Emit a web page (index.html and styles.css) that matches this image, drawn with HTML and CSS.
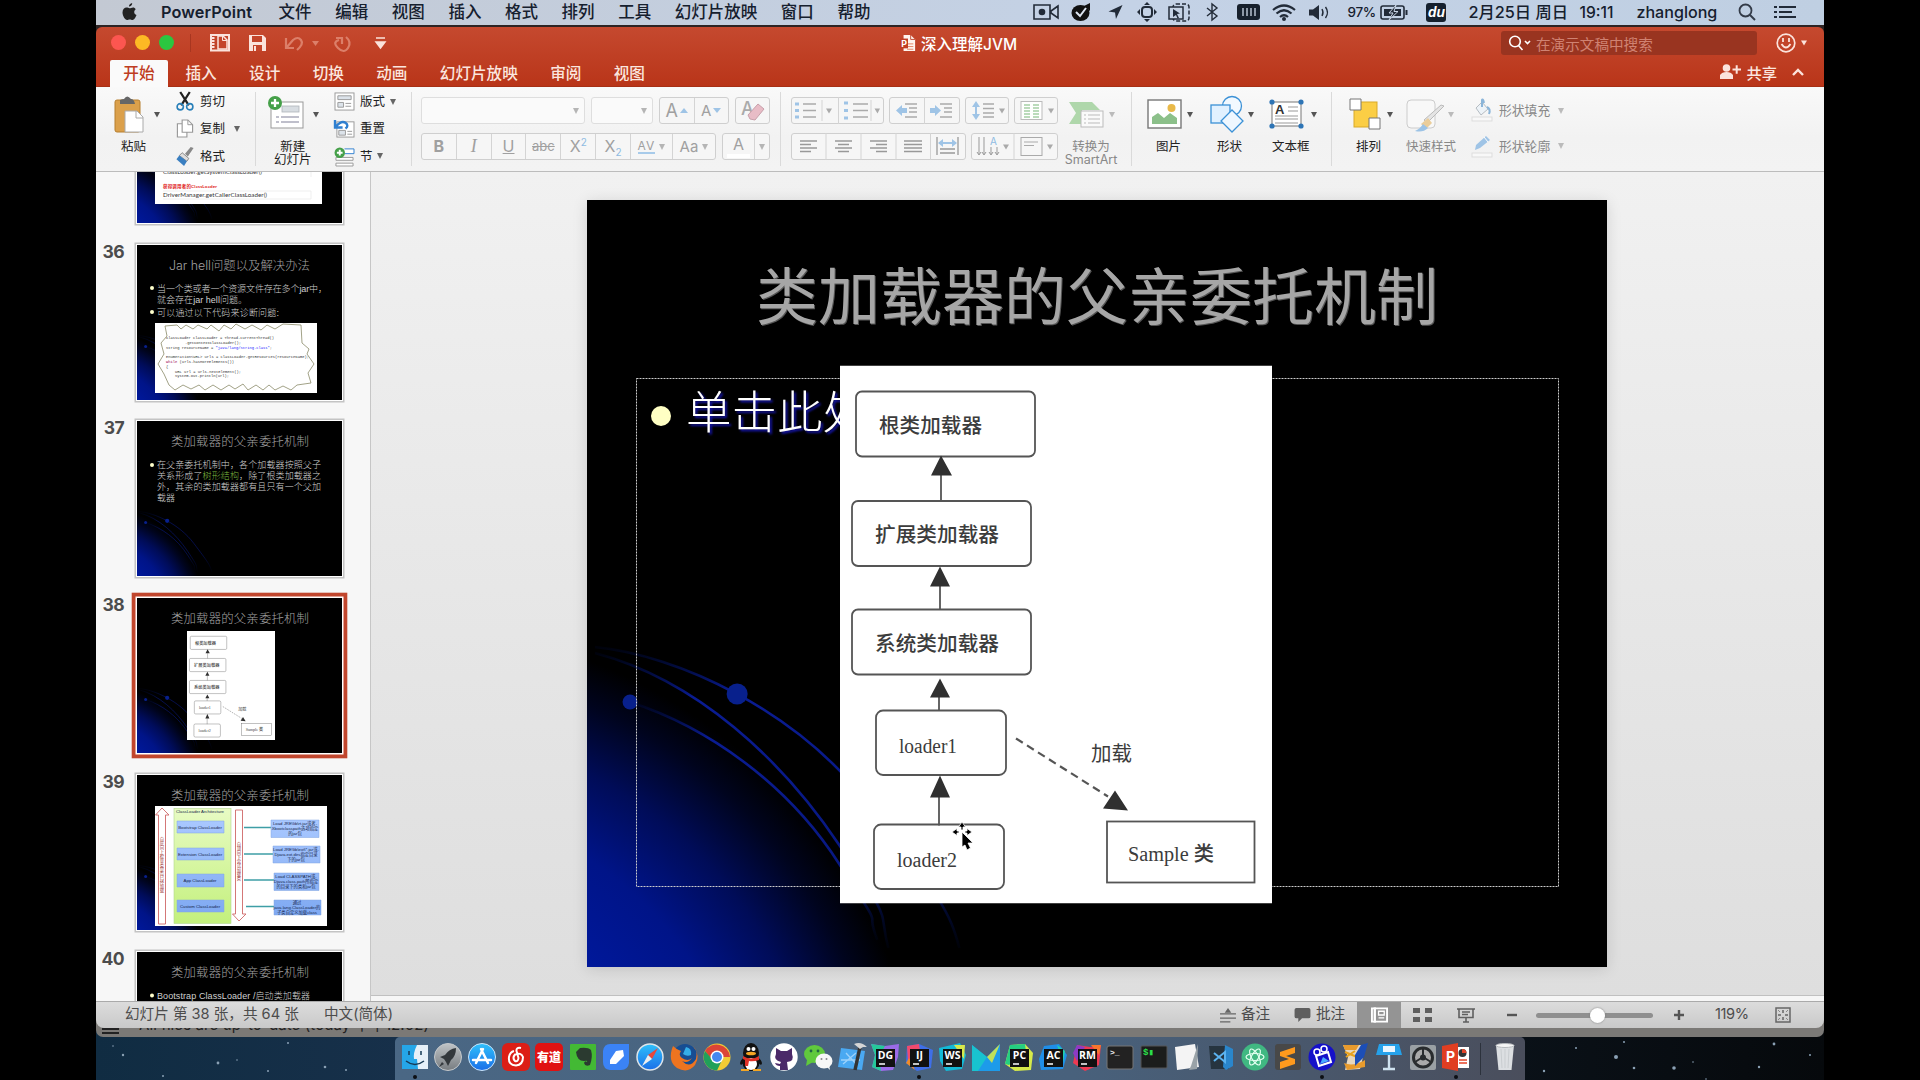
FILE: index.html
```html
<!DOCTYPE html>
<html lang="zh-CN">
<head>
<meta charset="utf-8">
<title>深入理解JVM</title>
<link rel="stylesheet" href="styles.css">
</head>
<body>
<svg class="defs" width="0" height="0">
  <defs>
    <radialGradient id="glow" gradientUnits="userSpaceOnUse" cx="-187" cy="950" r="525">
      <stop offset="0.5" stop-color="#00189a"/><stop offset="0.66" stop-color="#001488"/><stop offset="0.8" stop-color="#000c58"/><stop offset="0.92" stop-color="#00041e"/><stop offset="1" stop-color="#000"/>
    </radialGradient>
    <linearGradient id="arc" x1="0" y1="0" x2="0" y2="1"><stop offset="0" stop-color="#001470" stop-opacity="0.1"/><stop offset="0.15" stop-color="#0a1c92"/><stop offset="0.7" stop-color="#081880"/><stop offset="1" stop-color="#001050" stop-opacity="0.1"/></linearGradient>
    <linearGradient id="box" x1="0" y1="0" x2="0" y2="1"><stop offset="0" stop-color="#a9c8ff"/><stop offset="1" stop-color="#7fa9f2"/></linearGradient>
    <linearGradient id="lime" x1="0" y1="0" x2="0" y2="1"><stop offset="0" stop-color="#e8fbc4"/><stop offset="1" stop-color="#c3f07c"/></linearGradient>
    <linearGradient id="sky" x1="0" y1="0" x2="0" y2="1"><stop offset="0" stop-color="#2fc0fb"/><stop offset="1" stop-color="#1a6fe8"/></linearGradient>
    <linearGradient id="metal" x1="0" y1="0" x2="0" y2="1"><stop offset="0" stop-color="#bfc3c6"/><stop offset="1" stop-color="#777c80"/></linearGradient>
  </defs>
  <symbol id="backdrop" viewBox="0 0 1019 767" preserveAspectRatio="none">
    <rect width="1019" height="767" fill="#000"/>
    <rect width="520" height="767" fill="url(#glow)"/>
    <g fill="none" stroke="url(#arc)" stroke-width="2.600">
      <path d="M8 447C90 455 210 510 282 605S362 710 372 748"/>
      <path d="M8 453C110 480 195 560 252 645S290 705 301 748"/>
      <path d="M43 502C120 527 200 583 252 664S275 700 290 740"/>
    </g>
    <circle cx="150" cy="494" r="10.5" fill="#08208c"/><circle cx="43" cy="502" r="7.5" fill="#08208c"/>
  </symbol>
  <symbol id="diagram" viewBox="840 365 432 538" preserveAspectRatio="none">
    <rect x="840" y="365" width="432" height="538" fill="#fff"/>
    <g fill="none" stroke="#555" stroke-width="1.8">
      <rect x="856" y="391" width="179" height="65" rx="6"/><rect x="852" y="500.500" width="179" height="65" rx="6"/><rect x="852" y="609" width="179" height="65" rx="6"/><rect x="876" y="710" width="130" height="64.500" rx="7"/><rect x="874" y="824" width="130" height="64.500" rx="7"/><rect x="1107" y="821" width="147.500" height="61"/>
      <path d="M941 474V500M940 585V609M939 696V710M939 796V825"/>
      <path d="M1016 738L1108 796" stroke-width="2.200" stroke-dasharray="8 5"/>
    </g>
    <path fill="#303030" d="M941 455L952 475H931ZM940 566L950 586H930ZM940 678L950 697H930ZM940 775L950 797H930ZM1115 790L1128 810L1103 808Z"/>
    <g class="d-text">
      <text x="879" y="432" textLength="103" lengthAdjust="spacingAndGlyphs">根类加载器</text><text x="875" y="541.500" textLength="124" lengthAdjust="spacingAndGlyphs">扩展类加载器</text><text x="875" y="650" textLength="124" lengthAdjust="spacingAndGlyphs">系统类加载器</text><text class="thin" x="1091" y="760" textLength="41" lengthAdjust="spacingAndGlyphs">加载</text>
      <text x="899" y="752" textLength="58" lengthAdjust="spacingAndGlyphs">loader1</text><text x="897" y="866" textLength="60" lengthAdjust="spacingAndGlyphs">loader2</text><text x="1128" y="860" textLength="86" lengthAdjust="spacingAndGlyphs">Sample 类</text>
    </g>
  </symbol>
  <symbol id="arrow" viewBox="0 0 6 6"><path d="M0 0H6L3 6Z" fill="currentColor"/></symbol>
</svg>

<div class="screen">
  <header class="menubar">
    <svg class="apple" viewBox="0 0 15 18"><path fill="#222" d="M10.2 0c.1 2-1.500 3.700-3.200 3.600C6.800 1.800 8.500.2 10.200 0zM13.700 6.200c-2.200 1.500-1.900 4.700.8 5.900-.7 2-2.300 4.900-4 4.900-1 0-1.500-.6-2.700-.6s-1.800.6-2.700.6C3 17 .5 12.800.5 9.500.5 6.300 2.500 4.500 4.500 4.500c1.300 0 2.200.7 3.100.7.800 0 2-.8 3.500-.8 1 0 2 .6 2.600 1.800z"/></svg>
    <nav class="menus"><b>PowerPoint</b><span>文件</span><span>编辑</span><span>视图</span><span>插入</span><span>格式</span><span>排列</span><span>工具</span><span>幻灯片放映</span><span>窗口</span><span>帮助</span></nav>
    <div class="tray">
      <svg class="t-cam" viewBox="0 0 26 16"><path d="M1 1H17V15H1ZM25 2L18 7V9L25 14Z" fill="none" stroke="#222b38" stroke-width="1.6"/><circle cx="9" cy="8" r="3.300" fill="#222b38"/></svg>
      <svg class="t-check" viewBox="0 0 20 18"><ellipse cx="9.500" cy="10" rx="9" ry="8" fill="#111"/><path d="M13 3L19 0V8Z" fill="#111"/><path d="M5 9L9 13L15 5" fill="none" stroke="#dde5f0" stroke-width="2"/></svg>
      <svg class="t-loc" viewBox="0 0 15 15"><path d="M15 0L8 15L7 8L0 7Z" fill="#222b38"/></svg>
      <svg class="t-target" viewBox="0 0 20 20"><rect x="5" y="5" width="10" height="10" rx="3" fill="none" stroke="#222b38" stroke-width="2"/><path d="M10 0L13 3H7ZM10 20L13 17H7ZM0 10L3 7V13ZM20 10L17 7V13Z" fill="#222b38"/></svg>
      <svg class="t-frame" viewBox="0 0 22 19"><rect x="5" y="1" width="16" height="17" rx="3" fill="none" stroke="#222b38" stroke-width="1.500" stroke-dasharray="4 2"/><rect x="1" y="4" width="14" height="12" fill="#c6d3e5" stroke="#222b38" stroke-width="1.500"/><path d="M5 6L12 10.500L9 11L11 15L9.500 15.500L8 12L5 14Z" fill="#222b38"/></svg>
      <svg class="t-bt" viewBox="0 0 12 18"><path d="M1 5L11 13L6 17V1L11 5L1 13" fill="none" stroke="#222b38" stroke-width="1.400"/></svg>
      <svg class="t-mem" viewBox="0 0 23 16"><rect width="23" height="16" rx="3" fill="#17202c"/><path d="M6 4V12M10 4V12M14 4V12M18 4V12" stroke="#cdd8e6" stroke-width="1.300"/></svg>
      <svg class="t-wifi" viewBox="0 0 24 17"><path d="M1 6Q12-3 23 6M4.500 9.500Q12 3 19.500 9.500M8 13Q12 9.500 16 13" fill="none" stroke="#222b38" stroke-width="2.200"/><circle cx="12" cy="15" r="2" fill="#222b38"/></svg>
      <svg class="t-vol" viewBox="0 0 21 15"><path d="M0 4.500H4L10 0V15L4 10.500H0Z" fill="#222b38"/><path d="M13 4Q15 7.500 13 11M16.500 2Q20.500 7.500 16.500 13" fill="none" stroke="#222b38" stroke-width="1.400"/></svg>
      <span class="t-pct">97%</span>
      <svg class="t-bat" viewBox="0 0 28 15"><rect x="1" y="1" width="23" height="13" rx="2" fill="none" stroke="#222b38" stroke-width="1.600"/><rect x="4" y="4" width="17" height="7" fill="#222b38"/><path d="M16 0L9 8H13L9 15L18 6.500H14Z" fill="#222b38" stroke="#c8d4e4" stroke-width="1"/><rect x="25.500" y="5" width="2" height="5" fill="#222b38"/></svg>
      <span class="t-du">du</span>
      <span class="t-date">2月25日 周日</span><span class="t-time">19:11</span><span class="t-user">zhanglong</span>
      <svg class="t-find" viewBox="0 0 18 18"><circle cx="7.500" cy="7.500" r="6" fill="none" stroke="#333b48" stroke-width="1.800"/><path d="M12 12L17 17" stroke="#333b48" stroke-width="2"/></svg>
      <svg class="t-list" viewBox="0 0 22 14"><path d="M0 2H3M0 7H3M0 12H3M5 2H22M5 7H18M5 12H22" stroke="#222b38" stroke-width="2"/></svg>
    </div>
  </header>

  <main class="window">
    <div class="titlebar">
      <div class="title-row">
        <div class="lights"><i class="close"></i><i class="min"></i><i class="max"></i></div>
        <svg class="quick" viewBox="0 0 200 24">
          <path d="M5.500 3V21" stroke="#a83620"/>
          <path d="M26 4H44V19.500H26Z" fill="none" stroke="#fbe3dc" stroke-width="2"/><path d="M28 6V18" stroke="#fbe3dc" stroke-width="3" stroke-dasharray="2 1"/><path d="M33 5H38L42 9V18H33Z" fill="#c4452b" stroke="#fbe3dc" stroke-width="1.500"/><path d="M37.500 5V9.500H42" fill="none" stroke="#fbe3dc"/>
          <path d="M64 4H78L81 7V20H64Z" fill="#fbe3dc"/><path d="M67 5H77V11H67ZM68 14H77V20H68Z" fill="#c4452b"/><path d="M70 15V20" stroke="#fbe3dc" stroke-width="2"/>
          <g fill="none" stroke="#dc7f69" stroke-width="2.200"><path d="M101 7V17H109M102 16L108 9Q113 5 116 9T112 19"/><path d="M161 6Q167 11 163 17T153 17T154 9M151 7H157V13"/></g>
          <path d="M127 10H134L130.500 15Z" fill="#dc7f69"/><path d="M191 7H200M191 11H200L195.500 17Z" fill="#fbe3dc" stroke="#fbe3dc" stroke-width="1.500"/>
        </svg>
        <div class="doc-title"><svg viewBox="0 0 18 20"><path d="M4 1H12L17 6V19H4Z" fill="#fff4ee"/><path d="M12 1V6H17" fill="none" stroke="#bd4029"/><path d="M8 11H15M8 14H15M8 17H15" stroke="#e07a58"/><rect y="5" width="9" height="11" fill="#c03d25"/><text x="1.500" y="14" class="p-mark">P</text></svg><span>深入理解JVM</span></div>
        <div class="search"><svg viewBox="0 0 24 16"><circle cx="7" cy="6.500" r="5.300" fill="none" stroke="#fff" stroke-width="1.600"/><path d="M10.500 10.500L14.500 15M17 6L19.500 8.500L22 6" fill="none" stroke="#fff" stroke-width="1.600"/></svg><span>在演示文稿中搜索</span></div>
        <svg class="smile" viewBox="0 0 32 20"><circle cx="10" cy="10" r="8.800" fill="none" stroke="#fbe3dc" stroke-width="1.700"/><path d="M5.500 11Q10 18 14.500 11M7 5V9M13 5V9" fill="none" stroke="#fbe3dc" stroke-width="1.800"/><path d="M25 7.500H31L28 12.500Z" fill="#fbe3dc"/></svg>
      </div>
      <div class="tab-row">
        <nav class="tabs"><span class="on">开始</span><span>插入</span><span>设计</span><span>切换</span><span>动画</span><span>幻灯片放映</span><span>审阅</span><span>视图</span></nav>
        <div class="share"><svg viewBox="0 0 21 15"><circle cx="6.500" cy="4" r="3.800" fill="#fbe3dc"/><path d="M0 15V11Q2 8 6.500 8T13 11V15Z" fill="#fbe3dc"/><path d="M12.500 5.500H21M16.700 1.200V9.800" stroke="#fbe3dc" stroke-width="2"/></svg><span>共享</span><svg class="chev" viewBox="0 0 12 8"><path d="M1 7L6 2L11 7" fill="none" stroke="#fbe3dc" stroke-width="2.400"/></svg></div>
      </div>
    </div>

    <section class="ribbon">
      <div class="grp g-clip">
        <div class="big paste"><svg viewBox="0 0 50 38"><rect x="1" y="5" width="25" height="32" rx="2" fill="#dba04b" stroke="#b67e2f"/><path d="M6 9V5Q8 4 10 4Q13-1 17 4Q20 4 21 9Z" fill="#666"/><path d="M11 16H23L29 22V37H11Z" fill="#fff" stroke="#aaa"/><path d="M22 16V23H29" fill="none" stroke="#aaa"/><path d="M40 17H46L43 22.500Z" fill="#555"/></svg><span>粘贴</span></div>
        <div class="col">
          <div class="row"><svg viewBox="0 0 18 20"><path d="M4 0L13 14M14 0L5 14" stroke="#222" stroke-width="2.400"/><circle cx="4" cy="15.500" r="3.300" fill="none" stroke="#2a80b9" stroke-width="1.700"/><circle cx="14" cy="15.500" r="3.300" fill="none" stroke="#2a80b9" stroke-width="1.700"/></svg><span>剪切</span></div>
          <div class="row"><svg viewBox="0 0 18 20"><path d="M6 1H12L17 6V14H6ZM1 5H6V14H11V19H1Z" fill="#fff" stroke="#999" stroke-width="1.200"/><path d="M12 1V6H17" fill="none" stroke="#999"/></svg><span>复制</span><svg class="dd"><use href="#arrow"/></svg></div>
          <div class="row"><svg viewBox="0 0 18 20"><path d="M18 1L15 0L9 7L12 10Z" fill="#888"/><path d="M6 6L13 12L11 15L3 9Z" fill="#ddd" stroke="#888"/><path d="M3 9L11 15L8 20L0 13Z" fill="#3a7fc1"/></svg><span>格式</span></div>
        </div>
      </div>
      <div class="grp g-slide">
        <div class="big newslide"><svg viewBox="0 0 52 38"><rect x="3" y="7" width="32" height="26" fill="#fff" stroke="#999"/><rect x="14" y="11" width="17" height="6" fill="#d8dde2" stroke="#b0b5ba" stroke-width=".8"/><path d="M8 22H11M13 22H31M8 27H11M13 27H31" stroke="#aab" stroke-width="1.400"/><circle cx="7" cy="8" r="7" fill="#45a049"/><path d="M3 8H11M7 4V12" stroke="#fff" stroke-width="2.300"/><path d="M45 17H51L48 22.500Z" fill="#555"/></svg><span>新建<br>幻灯片</span></div>
        <div class="col">
          <div class="row"><svg viewBox="0 0 22 20"><rect x="1" y="1" width="20" height="18" fill="#fff" stroke="#999"/><path d="M4 4H18V8H4ZM4 11H10V16H4Z" fill="#dce3ea" stroke="#999"/><path d="M12 12H18M12 15H18" stroke="#999"/></svg><span>版式</span><svg class="dd"><use href="#arrow"/></svg></div>
          <div class="row"><svg viewBox="0 0 22 20"><rect x="3" y="3" width="18" height="16" fill="#fff" stroke="#999"/><path d="M5 12H12V17H5ZM14 13H19M14 16H19" fill="#dce3ea" stroke="#999"/><path d="M1 1V9H9M2 8Q8 1 12 4T12 10" fill="none" stroke="#2f7fd0" stroke-width="2.500"/></svg><span>重置</span></div>
          <div class="row"><svg viewBox="0 0 22 20"><path d="M11 2H21V7H11" fill="#fff" stroke="#2f7fd0"/><path d="M2 11H20V14H2ZM2 17H20V20H2Z" fill="#fff" stroke="#999"/><circle cx="6" cy="6" r="5.500" fill="#45a049"/><path d="M3 6H9M6 3V9" stroke="#fff" stroke-width="2"/></svg><span>节</span><svg class="dd tight"><use href="#arrow"/></svg></div>
        </div>
      </div>
      <div class="grp g-font">
        <div class="line">
          <div class="combo wide"><svg class="dd"><use href="#arrow"/></svg></div><div class="combo"><svg class="dd"><use href="#arrow"/></svg></div>
          <div class="seg f1"><span class="lg">A<i class="up"></i></span><span>A<i class="down"></i></span></div>
          <div class="seg f2"><svg viewBox="0 0 35 27"><text x="6" y="18" class="glyph">A</text><path d="M13 18L23 7L29 12L20 23L15 22Z" fill="#e8bcc6" stroke="#c7a0aa"/></svg></div>
        </div>
        <div class="line">
          <div class="seg f3"><span><b>B</b></span><span><i class="it">I</i></span><span><u>U</u></span><span class="sm"><s>abc</s></span><span>X<sup>2</sup></span><span>X<sub>2</sub></span><span class="w2"><em>AV</em><svg class="dd"><use href="#arrow"/></svg></span><span class="w2">Aa<svg class="dd"><use href="#arrow"/></svg></span></div>
          <div class="seg f4"><span class="w3"><em>A</em></span><span class="w4"><svg class="dd"><use href="#arrow"/></svg></span></div>
        </div>
      </div>
      <div class="grp g-para">
        <div class="paras">
          <div class="line">
            <div class="seg p1"><svg viewBox="0 0 93 27"><path d="M4 7H8M4 13.500H8M4 20H8M53 6H57M53 13.500H57M53 21H57" stroke="#9fc4e6" stroke-width="3"/><path d="M12 7H25M12 13.500H25M12 20H25M62 7H77M62 13.500H77M62 20H77" stroke="#aaa" stroke-width="1.300"/><path d="M31 3V24M47.500 0V27M80 3V24" stroke="#d4d4d4"/><path d="M35 11.500H41L38 16.500ZM83.500 11.500H89L86.500 16.500Z" fill="#aaa"/></svg></div>
            <div class="seg p2"><svg viewBox="0 0 71 27"><path d="M35.500 0V27" stroke="#d4d4d4"/><path d="M7 13.500L13 8V11H18V16H13V19ZM52 13.500L46 8V11H41V16H46V19Z" fill="#9fc4e6"/><path d="M16 7H28M20 11H28M20 15H28M16 20H28M51 7H63M55 11H63M55 15H63M51 20H63" stroke="#aaa" stroke-width="1.300"/></svg></div>
            <div class="seg p3"><svg viewBox="0 0 44 27"><path d="M11 4L15 10H12V17H15L11 23L7 17H10V10H7Z" fill="#9fc4e6"/><path d="M18 7H29M18 11.500H29M18 16H29M18 20H29" stroke="#aaa" stroke-width="1.300"/><path d="M34 11.500H40L37 16.500Z" fill="#aaa"/></svg></div>
            <div class="seg p3"><svg viewBox="0 0 44 27"><rect x="7" y="4.500" width="21" height="18" fill="#fff" stroke="#bbb"/><path d="M10 8H16M10 11H16M10 14H16M10 17H16M10 20H16M19 8H25M19 11H25M19 14H25M19 17H25M19 20H25" stroke="#a5d0a5" stroke-width="1.500"/><path d="M34 11.500H40L37 16.500Z" fill="#aaa"/></svg></div>
          </div>
          <div class="line">
            <div class="seg p4"><svg viewBox="0 0 175 27"><path d="M35 0V27M70 0V27M105 0V27M139.500 0V27" stroke="#d4d4d4"/><path d="M9 8H26M9 11.500H20M9 15H26M9 18.500H20M44 8H61M47 11.500H58M44 15H61M47 18.500H58M79 8H96M85 11.500H96M79 15H96M85 18.500H96M113 8H131M113 11.500H131M113 15H131M113 18.500H131M146 4V22M167 4V22M149 16H164M149 20H164" stroke="#999" stroke-width="1.300"/><path d="M147 10L152 6V9H161V6L166 10L161 14V11H152V14Z" fill="#9fc4e6"/></svg></div>
            <div class="seg p5"><svg viewBox="0 0 87 27"><path d="M43 0V27" stroke="#d4d4d4"/><path d="M8 4V21M13 4V21M20 14V21M26 14V21M6 19L8 22L10 19M11 19L13 22L15 19M18 19L20 22L22 19M24 19L26 22L28 19" fill="none" stroke="#999"/><text x="19" y="12" class="tiny-a">A</text><rect x="50" y="4.500" width="21" height="18" fill="none" stroke="#aaa"/><path d="M53 9H67M53 12.500H63" stroke="#aaa"/><path d="M32 11.500H38L35 16.500ZM76 11.500H82L79 16.500Z" fill="#aaa"/></svg></div>
          </div>
        </div>
        <div class="big smart dim"><svg viewBox="0 0 50 38"><path d="M1 7H24L32 15H14V24L13 29H1L8 18Z" fill="#afd7ab"/><rect x="13" y="16" width="22" height="16" fill="#fafafa" stroke="#bbb"/><path d="M16 20H18M20 20H32M16 24H18M20 24H32M16 28H18M20 28H32" stroke="#bbb"/><path d="M41 17H47L44 22.500Z" fill="#bbb"/></svg><span>转换为<br>SmartArt</span></div>
      </div>
      <div class="grp g-insert">
        <div class="big pic"><svg viewBox="0 0 50 38"><rect x="1" y="5" width="33" height="28" fill="#fff" stroke="#777" stroke-width="1.400"/><path d="M5 29V22L11 18L17 23L23 18L30 23V29Z" fill="#8cc08a"/><circle cx="24.500" cy="13" r="4" fill="#e9b949"/><path d="M40 17H46L43 22.500Z" fill="#555"/></svg><span>图片</span></div>
        <div class="big shp"><svg viewBox="0 0 50 38"><circle cx="22" cy="11" r="9.500" fill="#f2f9ff" stroke="#3b91d6" stroke-width="1.300"/><rect x="1" y="10" width="19" height="18" fill="#e1f1ff" stroke="#3b91d6" stroke-width="1.300"/><path d="M22 15L33 26L22 37L11 26Z" fill="#eef7ff" stroke="#3b91d6" stroke-width="1.300"/><path d="M38 17H44L41 22.500Z" fill="#555"/></svg><span>形状</span></div>
        <div class="big txt"><svg viewBox="0 0 50 38"><rect x="2" y="7" width="29" height="24" fill="#fff" stroke="#777"/><path d="M18 12H28M18 16H28M5 21H28M5 24H28M5 28H28" stroke="#999"/><text x="5" y="19" class="box-a">A</text><g fill="#2e75b6"><circle cx="2" cy="7" r="2.600"/><circle cx="31" cy="7" r="2.600"/><circle cx="2" cy="31" r="2.600"/><circle cx="31" cy="31" r="2.600"/></g><path d="M41 17H47L44 22.500Z" fill="#555"/></svg><span>文本框</span></div>
      </div>
      <div class="grp g-style">
        <div class="big arr"><svg viewBox="0 0 50 38"><rect x="5" y="7" width="23" height="25" fill="#fbce45" stroke="#d9a928"/><path d="M1 4H12V15H1ZM20 23H31V34H20Z" fill="#fff" stroke="#777"/><path d="M38 17H44L41 22.500Z" fill="#555"/></svg><span>排列</span></div>
        <div class="big quickst dim"><svg viewBox="0 0 50 38"><rect x="1" y="5" width="28" height="28" rx="4" fill="#f8f8f8" stroke="#ccc"/><path d="M38 11L21 28L18 25L35 10Z" fill="#e4e4e4" stroke="#bbb"/><path d="M22 23L26 28L20 34L15 29Z" fill="#eacd9a"/><path d="M17 29L22 33Q17 38 9 36Q14 34 17 29Z" fill="#9cc3e6"/><path d="M42 17H48L45 22.500Z" fill="#bbb"/></svg><span>快速样式</span></div>
        <div class="fills">
          <div class="row dim"><svg viewBox="0 0 22 23"><path d="M5 9L11 3L17 10L10 16Z" fill="#edf3f8" stroke="#b5bcc2"/><path d="M11 8V1Q12-1 13 4M16 8Q20 10 18 15" stroke="#8bb5d9" stroke-width="2" fill="none"/><rect x="1" y="18" width="20" height="4" fill="#f8f8f8" stroke="#ddd"/></svg><span>形状填充</span><svg class="dd"><use href="#arrow"/></svg></div>
          <div class="row dim"><svg viewBox="0 0 22 23"><path d="M4 15L5 10L15 1L19 5L9 13Z" fill="#9fc4e6"/><path d="M13 2L17 7" stroke="#fff"/><rect x="1" y="18" width="20" height="4" fill="#f8f8f8" stroke="#ddd"/></svg><span>形状轮廓</span><svg class="dd"><use href="#arrow"/></svg></div>
        </div>
      </div>
    </section>

    <div class="work">
      <aside class="pane"><div class="thumbs">
        <div class="thumb"><b></b><svg viewBox="0 0 205 155"><use href="#backdrop" width="205" height="155"/><rect x="18" y="30" width="167" height="106" fill="#fff"/><text x="26" y="106" class="gs" textLength="99">ClassLoader.getSystemClassLoader()</text><text x="26" y="120" class="gs red" textLength="54">获得调用者的ClassLoader</text><text x="26" y="129" class="gs" textLength="104">DriverManager.getCallerClassLoader()</text><path d="M26 123H174V131H26M174 101V109" fill="none" stroke="#e8e8e8" stroke-width=".7"/></svg></div>
        <div class="thumb"><b>36</b><svg viewBox="0 0 205 155"><use href="#backdrop" width="205" height="155"/><text x="32" y="24.500" class="tt" textLength="141">Jar hell问题以及解决办法</text><circle cx="15" cy="43" r="2" fill="#ffffcc"/><circle cx="15" cy="67" r="2" fill="#ffffcc"/><g class="tb"><text x="20" y="46.500" textLength="170">当一个类或者一个资源文件存在多个jar中，</text><text x="20" y="57.500" textLength="90">就会存在jar hell问题。</text><text x="20" y="70.500" textLength="122">可以通过以下代码来诊断问题:</text></g><rect x="18" y="78" width="162" height="70" fill="#fff"/><path d="M28 81L40 80L44 84L49 80L56 84L61 80L70 84L74 80L82 86L87 80L94 84L99 79L108 84L115 80L124 85L130 80L138 84L146 79L164 80L165 98L172 104L170 109L177 119L171 128L174 138L160 140L154 145L146 141L138 145L132 140L126 145L119 140L111 145L106 139L98 144L92 140L84 145L76 140L68 145L62 140L54 144L46 140L38 145L32 140L27 129L21 119L27 109L24 98L30 91Z" fill="none" stroke="#8a8a68" stroke-width=".8"/><g class="code"><text x="29" y="94" textLength="108">ClassLoader classLoader = Thread.currentThread()</text><text x="48" y="98.500" textLength="56">.getContextClassLoader();</text><text x="29" y="103.500" textLength="106">String resourceName = <tspan fill="#22f">"java/lang/String.class"</tspan>;</text><text x="29" y="113" textLength="143">Enumeration&lt;URL&gt; urls = classLoader.getResources(resourceName);</text><text x="29" y="118" textLength="68"><tspan fill="#905">while</tspan> (urls.hasMoreElements())</text><text x="29" y="122.500">{</text><text x="38" y="127.500" textLength="66">URL url = urls.nextElement();</text><text x="38" y="132" textLength="54">System.out.println(url);</text></g></svg></div>
        <div class="thumb"><b>37</b><svg viewBox="0 0 205 155"><use href="#backdrop" width="205" height="155"/><text x="34" y="24.500" class="tt" textLength="138">类加载器的父亲委托机制</text><circle cx="15" cy="44" r="2" fill="#ffffcc"/><g class="tb"><text x="20" y="47" textLength="164">在父亲委托机制中，各个加载器按照父子</text><text x="20" y="58" textLength="164">关系形成了<tspan fill="#7cb83e">树形结构</tspan>，除了根类加载器之</text><text x="20" y="69" textLength="164">外，其余的类加载器都有且只有一个父加</text><text x="20" y="79.500" textLength="18">载器</text></g></svg></div>
        <div class="thumb active"><b>38</b><svg viewBox="0 0 205 155"><use href="#backdrop" width="205" height="155"/><text x="34" y="24.500" class="tt" textLength="138">类加载器的父亲委托机制</text><use href="#diagram" x="50" y="33" width="88" height="109"/></svg></div>
        <div class="thumb"><b>39</b><svg viewBox="0 0 205 155"><use href="#backdrop" width="205" height="155"/><text x="34" y="24.500" class="tt" textLength="138">类加载器的父亲委托机制</text><rect x="18" y="31" width="172" height="120" fill="#fff"/><rect x="37" y="33.500" width="57" height="115" fill="url(#lime)" stroke="#b3d890" stroke-width=".6"/>
          <path d="M25 33L32 40H28.500V149H21.500V40H18.500ZM102 146L95.500 139H98.500V35H105.500V139H109Z" fill="#fff" stroke="#cf6868" stroke-width=".9"/>
          <path d="M107 52.500H135M107 79H137M107 105H137M109 131.500H137" stroke="#3f9ea6" stroke-width="1.500"/>
          <g fill="url(#box)" stroke="#80a5e0" stroke-width=".5"><path d="M40 46H87V58H40ZM40 73H87V85H40ZM40 99H87V112H40ZM40 125H87V137H40ZM134 45H182V62.500H134ZM136 71H183V88H136ZM137 98H182V115.500H137ZM137 125H184V140H137Z"/></g>
          <g class="cl"><text x="63" y="38">ClassLoader Architecture</text><text x="63" y="53.500">Bootstrap ClassLoader</text><text x="63" y="80.500">Extension ClassLoader</text><text x="63" y="107">App ClassLoader</text><text x="63" y="132.500">Custom ClassLoader</text>
          <text x="158" y="50">Load JRE\lib\rt.jar或者-</text><text x="158" y="55">Xbootclasspath选项指定</text><text x="158" y="60">的jar包</text><text x="159" y="76">Load JRE\lib\ext\*.jar或-</text><text x="159" y="81">Djava.ext.dirs指定目录</text><text x="159" y="86">下的jar包</text><text x="159" y="103">Load CLASSPATH或-</text><text x="159" y="108">Djava.class.path所指定</text><text x="159" y="113">的目录下的类和jar包</text><text x="160" y="129">通过</text><text x="160" y="134">java.lang.ClassLoader的</text><text x="160" y="139">子类自定义加载class</text></g>
          <text x="25" y="62" class="vt">自底向上检查类是否已经加载</text><text x="102" y="67" class="vt">自顶向下尝试加载类</text></svg></div>
        <div class="thumb"><b>40</b><svg viewBox="0 0 205 155"><use href="#backdrop" width="205" height="155"/><text x="34" y="24.500" class="tt" textLength="138">类加载器的父亲委托机制</text><circle cx="15" cy="43.500" r="2" fill="#ffffcc"/><text x="20" y="46.500" class="tb" textLength="153">Bootstrap ClassLoader /启动类加载器</text></svg></div>
      </div></aside>
      <section class="stage">
        <div class="canvas"><svg class="slide" viewBox="587 200 1020 767">
          <use href="#backdrop" x="587" y="200" width="1020" height="767"/>
          <rect x="636.500" y="378.500" width="922" height="508" fill="none" stroke="#ccc" stroke-dasharray="2 1"/>
          <text class="s-title" x="756" y="320" textLength="682">类加载器的父亲委托机制</text>
          <circle cx="661" cy="416" r="10" fill="#ffffc4"/><text class="s-body" x="686" y="429" textLength="182">单击此处</text>
          <use href="#diagram" x="840" y="365.500" width="432" height="538"/>
          <g stroke="#fff" stroke-width=".8" fill="#000"><path d="M962 822L965.500 827H963V830H961V827H958.500ZM952 832L957 828.500V831H959V833H957V835.500ZM972 832L967 828.500V831H965V833H967V835.500Z"/><path d="M962 832L973 843H968L970.500 848L967 850L965 845L962 847Z"/></g>
        </svg></div>
        <div class="notes"></div>
      </section>
    </div>

    <footer class="status">
      <span class="count">幻灯片 第 38 张，共 64 张</span><span class="lang">中文(简体)</span>
      <div class="views">
        <svg class="v-note" viewBox="0 0 17 16"><path d="M8.500 0L12 5H5ZM0 5.500H17V7H0ZM0 10H17V11.500H0ZM0 14H11V15.500H0Z" fill="#666"/></svg><span>备注</span>
        <svg class="v-com" viewBox="0 0 17 15"><path d="M2 0H15Q17 0 17 2V9Q17 11 15 11H8L4 15V11H2Q0 11 0 9V2Q0 0 2 0Z" fill="#5f5f5f"/></svg><span>批注</span>
        <i class="cur"><svg viewBox="0 0 18 16"><path d="M1 1H17V15H1Z" fill="none" stroke="#fff" stroke-width="2"/><path d="M4 0V16" stroke="#fff" stroke-width="2.500"/><path d="M8 4H14V8H8ZM8 11H14" stroke="#fff" fill="none" stroke-width="1.400"/></svg></i>
        <svg class="v-grid" viewBox="0 0 19 14"><path d="M0 0H7V5H0ZM12 0H19V5H12ZM0 9H7V14H0ZM12 9H19V14H12Z" fill="#5f5f5f"/></svg>
        <svg class="v-show" viewBox="0 0 18 15"><path d="M0 1H18M2 1V9.500H16V1M5 4H13M5 6.500H11M9 9V14M6 14H12" fill="none" stroke="#5f5f5f" stroke-width="1.600"/></svg>
        <svg class="v-minus" viewBox="0 0 10 10"><path d="M0 5H10" stroke="#555" stroke-width="2.400"/></svg>
        <div class="slider"><i></i></div>
        <svg class="v-plus" viewBox="0 0 10 10"><path d="M0 5H10M5 0V10" stroke="#555" stroke-width="2.400"/></svg>
        <span class="zoom">119%</span>
        <svg class="v-fit" viewBox="0 0 16 16"><rect x="1" y="1" width="14" height="14" fill="none" stroke="#666" stroke-width="1.500"/><path d="M8 3V6M8 10V13M3 8H6M10 8H13" stroke="#666" stroke-width="1.500"/><path d="M3 3L5 5M13 3L11 5M3 13L5 11M13 13L11 11" stroke="#888"/></svg>
      </div>
    </footer>
  </main>

  <div class="behind"><svg viewBox="0 0 25 9"><path d="M0 1H17M0 5H17" stroke="#222" stroke-width="2"/></svg><span>All files are up-to-date (today 下午12:02)</span></div>
  <div class="desktop">
    <svg class="stars" viewBox="0 0 1728 43"><g fill="#8aa0b4"><circle cx="27" cy="18" r="1.200"/><circle cx="122" cy="26" r="1.400"/><circle cx="67" cy="39" r="1"/><circle cx="192" cy="6" r="1"/><circle cx="229" cy="30" r="1.300"/><circle cx="250" cy="33" r="1"/><circle cx="172" cy="34" r="1"/><circle cx="141" cy="23" r=".8"/><circle cx="17" cy="9" r=".8"/><circle cx="1520" cy="20" r="2"/><circle cx="1538" cy="31" r="1.300"/><circle cx="1578" cy="31" r="1.800"/><circle cx="1678" cy="7" r="1.400"/><circle cx="1663" cy="30" r="1.200"/><circle cx="1714" cy="18" r="1"/><circle cx="1448" cy="34" r="1.200"/><circle cx="1480" cy="11" r="1"/><circle cx="1528" cy="5" r="1"/><circle cx="1610" cy="42" r=".8"/><circle cx="1597" cy="25" r=".8"/></g></svg>
    <div class="dock">
      <i class="run"><svg viewBox="0 0 28 28"><path d="M1 2H27V26H1Z" fill="#e6f0f8"/><path d="M1 2H16Q12 10 13 16H16L17 26H1Z" fill="#25a6e8"/><path d="M8 8V12M20 8V12M5 18Q14 25 23 18" fill="none" stroke="#163a55" stroke-width="1.500"/></svg></i>
      <i><svg viewBox="0 0 28 28"><circle cx="14" cy="14" r="13.500" fill="url(#metal)" stroke="#c5c9cc"/><path d="M22 5Q15 6 11 12L6 14L10 16L12 19L14 23L17 17Q22 13 22 5ZM8 19L5 24L10 21Z" fill="#33383c"/></svg></i>
      <i><svg viewBox="0 0 28 28"><circle cx="14" cy="14" r="13.500" fill="url(#sky)" stroke="#cde6fa"/><path d="M15 6L8 20M13 6L20 20M5 17H23" stroke="#fff" stroke-width="2.500" stroke-linecap="round"/></svg></i>
      <i><svg viewBox="0 0 28 28"><rect width="28" height="28" rx="6" fill="#dc1e16"/><path d="M19 5Q14 4 14.500 8L16.500 15Q16 19 13 18Q10 15 13 11.500Q19 9 21 14Q21 22 14 22.500Q6 22 7 14Q8 9 12 8" fill="none" stroke="#fff" stroke-width="2"/></svg></i>
      <i><svg viewBox="0 0 28 28"><rect width="28" height="28" rx="5" fill="#e01212"/><text x="14" y="18.500" class="yd">有道</text></svg></i>
      <i><svg viewBox="0 0 28 28"><rect x="1" y="1" width="26" height="26" rx="1" fill="#43b934"/><path d="M7 9L11 5Q19 4 22 7Q24 14 21 22Q16 24 15 20Q16 17 18 19Q19 17 15 18Q8 18 7 9Z" fill="#2b3a30"/></svg></i>
      <i><svg viewBox="0 0 28 28"><path d="M8 1H27V20Q26 27 19 27H8Q1 26 1 19V8Q2 1 8 1Z" fill="#3b83f6"/><path d="M8 17L14 8L21 7L22 13L14 21H8Z" fill="#fff"/></svg></i>
      <i><svg viewBox="0 0 28 28"><circle cx="14" cy="14" r="13" fill="url(#sky)" stroke="#dde5ea" stroke-width="1.500"/><path d="M22 5L16 16L12 12Z" fill="#e8473a"/><path d="M6 23L12 12L16 16Z" fill="#eee"/></svg></i>
      <i><svg viewBox="0 0 28 28"><circle cx="15" cy="13" r="12" fill="#174d92"/><path d="M16 4Q22 5 21 12Q17 14 13 11Z" fill="#36aee8"/><path d="M3 3Q7 7 11 8Q8 12 12 15Q18 19 22 15Q18 21 12 18Q20 26 26 16Q28 8 23 3Q31 13 25 22Q18 31 7 25Q-3 18 3 3Z" fill="#ee7420"/></svg></i>
      <i><svg viewBox="0 0 28 28"><circle cx="14" cy="14" r="13.500" fill="#f1cb35"/><path d="M14 14H27A13.500 13.500 0 0 0 2 8L9 17Z" fill="#dc4437"/><path d="M2 8A13.500 13.500 0 0 0 14 27.500L19 17L9 16Z" fill="#20a05a"/><circle cx="14" cy="14" r="6.500" fill="#fff"/><circle cx="14" cy="14" r="5" fill="#4688f1"/></svg></i>
      <i><svg viewBox="0 0 28 28"><path d="M7 14Q1 20 4 22L8 19M21 14Q27 20 24 22L20 19" fill="#111"/><ellipse cx="14" cy="10" rx="8" ry="10" fill="#111"/><ellipse cx="14" cy="20" rx="8.500" ry="8" fill="#111"/><ellipse cx="14" cy="21" rx="6" ry="6" fill="#fff"/><circle cx="11.500" cy="6" r="2" fill="#fff"/><circle cx="16.500" cy="6" r="2" fill="#fff"/><ellipse cx="14" cy="10.500" rx="5" ry="1.800" fill="#f5a623"/><path d="M6 13Q14 18 22 13V17Q16 19 12 18L11 23H8V17L6 16Z" fill="#e03127"/><path d="M4 26H12V28H4ZM16 26H24V28H16Z" fill="#f5a623"/></svg></i>
      <i><svg viewBox="0 0 28 28"><circle cx="14" cy="14" r="13.700" fill="#fff"/><path d="M6 5L11 8H17L22 5V11Q25 18 17 19L18 27H10V23Q6 23 5 20L10 21L11 19Q3 17 6 11Z" fill="#4b2969"/></svg></i>
      <i><svg viewBox="0 0 28 28"><ellipse cx="10.500" cy="11" rx="10.500" ry="9" fill="#60c93d"/><path d="M3 17L2 23L9 19Z" fill="#60c93d"/><ellipse cx="20" cy="18" rx="8.500" ry="7.500" fill="#f7f7f7"/><path d="M23 24L26 27L25 22Z" fill="#f7f7f7"/><circle cx="7" cy="8" r="1.400" fill="#264"/><circle cx="14" cy="8" r="1.400" fill="#264"/><circle cx="17.500" cy="16" r="1" fill="#888"/><circle cx="22.500" cy="16" r="1" fill="#888"/></svg></i>
      <i><svg viewBox="0 0 28 28"><path d="M3 5L27 8L24 27L0 24Z" fill="#4aa9f2"/><path d="M5 21L18 10M8 10L19 22M3 17H22" stroke="#9dd2fb" stroke-width="1.300"/><path d="M22 4L17 27" stroke="#333" stroke-width="3.500"/><path d="M16 1Q23-2 29 4L25 4L22 6Z" fill="#d5d5d5"/></svg></i>
      <i><svg viewBox="0 0 28 28"><path d="M0 1L14 3L28 1L27 14L22 27L10 28L1 24L4 12Z" fill="#9b6be8"/><path d="M0 1L14 3L8 14L10 28L1 24L4 12Z" fill="#26c99a"/><rect x="5" y="6" width="19" height="18" fill="#111"/><text x="14.500" y="16" class="jb">DG</text><path d="M8 21H14" stroke="#fff" stroke-width="1.500"/></svg></i>
      <i class="run"><svg viewBox="0 0 28 28"><path d="M2 3L14 1L28 7L26 25L12 28L1 20Z" fill="#3f6fe8"/><path d="M2 3L14 1L16 15L3 18Z" fill="#f14a6c"/><path d="M1 20L4 15L10 27Z" fill="#f08c28"/><rect x="5" y="6" width="19" height="18" fill="#111"/><text x="14.500" y="16" class="jb">IJ</text><path d="M8 21H14" stroke="#fff" stroke-width="1.500"/></svg></i>
      <i><svg viewBox="0 0 28 28"><path d="M1 5L22 0L28 12L24 26L8 28L2 18Z" fill="#13b9d6"/><path d="M16 2L27 2L26 16Z" fill="#d7e84c"/><rect x="5" y="6" width="19" height="18" fill="#111"/><text x="14.500" y="16" class="jb">WS</text><path d="M8 21H14" stroke="#fff" stroke-width="1.500"/></svg></i>
      <i><svg viewBox="0 0 28 28"><path d="M0 2L15 14L28 1V28H0Z" fill="#1d9bea"/><path d="M0 2L15 14L6 28H0Z" fill="#18c3cf"/><path d="M28 1L15 14L20 20Z" fill="#bfe05a"/></svg></i>
      <i><svg viewBox="0 0 28 28"><path d="M5 2L20 1L28 10L26 27L10 28L0 21Z" fill="#d6ea4a"/><path d="M5 2L20 1L21 9L4 22L0 21Z" fill="#25cf82"/><rect x="5" y="6" width="19" height="18" fill="#111"/><text x="14.500" y="16" class="jb">PC</text><path d="M8 21H14" stroke="#fff" stroke-width="1.500"/></svg></i>
      <i><svg viewBox="0 0 28 28"><path d="M5 3L20 1L28 12L24 26L2 27L0 16Z" fill="#1f8ee8"/><path d="M18 2L26 8L24 20Z" fill="#22d0b0"/><rect x="5" y="6" width="19" height="18" fill="#111"/><text x="14.500" y="16" class="jb">AC</text><path d="M8 21H14" stroke="#fff" stroke-width="1.500"/></svg></i>
      <i><svg viewBox="0 0 28 28"><path d="M4 2L17 4L28 2L26 22L12 28L0 20Z" fill="#ee3a52"/><path d="M4 2L12 4L4 18L0 10Z" fill="#8c3bc5"/><path d="M18 2L28 2L26 12Z" fill="#f5762e"/><rect x="5" y="6" width="19" height="18" fill="#111"/><text x="14.500" y="16" class="jb">RM</text><path d="M8 21H14" stroke="#fff" stroke-width="1.500"/></svg></i>
      <i><svg viewBox="0 0 28 28"><rect x="1" y="3" width="26" height="23" rx="2" fill="#222" stroke="#777"/><text x="4" y="12" class="sh">&gt;_</text></svg></i>
      <i><svg viewBox="0 0 28 28"><rect x="1" y="3" width="26" height="22" rx="1" fill="#1b1d1c" stroke="#555"/><text x="3" y="12" class="sh gr">$▮</text></svg></i>
      <i><svg viewBox="0 0 28 28"><path d="M2 4L22 1L26 24L4 27Z" fill="#f4f4f4"/><path d="M25 1L18 23L16 27L24 26Z" fill="#9aa3a8"/></svg></i>
      <i><svg viewBox="0 0 28 28"><path d="M2 3L20 3L22 26L4 26Z" fill="#26343f"/><path d="M18 2L26 6V23L19 27L16 24Z" fill="#2a86cc"/><path d="M7 10L18 19V9L7 18" fill="none" stroke="#5bb3f0" stroke-width="2"/></svg></i>
      <i><svg viewBox="0 0 28 28"><circle cx="14" cy="14" r="13.500" fill="#40b882"/><g fill="none" stroke="#e2fff0" stroke-width="1.200"><ellipse cx="14" cy="14" rx="9" ry="3.500"/><ellipse cx="14" cy="14" rx="9" ry="3.500" transform="rotate(60 14 14)"/><ellipse cx="14" cy="14" rx="9" ry="3.500" transform="rotate(120 14 14)"/></g></svg></i>
      <i><svg viewBox="0 0 28 28"><rect x="1" y="1" width="26" height="26" rx="3" fill="#484848"/><path d="M21 4V10L12 13L21 16V21L6 26V19L15 16L6 13V9Z" fill="#ff9a1d"/></svg></i>
      <i class="run"><svg viewBox="0 0 28 28"><circle cx="14" cy="14" r="13.500" fill="#1510c9"/><path d="M8 13L20 9L23 19L11 23Z" fill="none" stroke="#fff" stroke-width="2"/><circle cx="9" cy="9" r="3" fill="none" stroke="#fff" stroke-width="1.500"/><circle cx="16" cy="6" r="3" fill="none" stroke="#fff" stroke-width="1.500"/><path d="M12 21L15 14L21 18Z" fill="#49a8ff"/></svg></i>
      <i><svg viewBox="0 0 28 28"><path d="M2 2L20 2L22 14L19 26L4 27L7 14Z" fill="#e7d7bd"/><path d="M2 2H18L15 7H4ZM3 20Q12 24 24 17V24L6 27Z" fill="#e89b2d"/><path d="M4 9L16 14M5 14L14 8" stroke="#e8a21d" stroke-width="2"/><path d="M27 0L23 14L14 23L14 12L20 2Z" fill="#1c4eb6"/></svg></i>
      <i><svg viewBox="0 0 28 28"><path d="M4 1H24L27 12H1Z" fill="#25a1ea"/><path d="M8 3H20V9H8Z" fill="#e9f6ff"/><path d="M14 12V26M8 26H20" stroke="#cfe2ef" stroke-width="2.400"/></svg></i>
      <i><svg viewBox="0 0 28 28"><rect x="1" y="2" width="26" height="25" rx="2" fill="#9aa0a4"/><circle cx="14" cy="14.500" r="9.500" fill="#aaa" stroke="#292c2e" stroke-width="3"/><circle cx="14" cy="14.500" r="3" fill="#292c2e"/><path d="M14 14V5M14 14L6 19M14 14L22 19" stroke="#292c2e" stroke-width="2"/></svg></i>
      <i class="run"><svg viewBox="0 0 28 28"><path d="M14 4H27V25H14Z" fill="#fff"/><circle cx="20.500" cy="10" r="4" fill="#333"/><path d="M20 10V6A4 4 0 0 1 24.500 10Z" fill="#e6452a"/><path d="M17 17H25M17 20H25" stroke="#e6452a" stroke-width="1.400"/><path d="M0 3L16 0V28L0 25Z" fill="#e03e22"/><text x="4" y="19" class="pp">P</text></svg></i>
      <b class="rule"></b>
      <i class="bin"><svg viewBox="0 0 28 28"><path d="M5 2H23L20.500 27H7.500Z" fill="#dcdfe2"/><ellipse cx="14" cy="2.500" rx="9" ry="2" fill="#f6f6f6" stroke="#b5b9bd"/><path d="M10 6L11 25M14 6V25M18 6L17 25" stroke="#c9cdd0"/></svg></i>
    </div>
  </div>
</div>
</body>
</html>
```
FILE: styles.css
```css
* { box-sizing: border-box; }
body { margin: 0; background: #000; font-family: Inter, "Noto Sans CJK SC", sans-serif; color: #222; overflow: hidden; }
svg { display: block; flex: none; overflow: visible; }
.defs { position: absolute; }
.screen { width: 1728px; height: 1080px; margin-left: 96px; display: flex; flex-direction: column; background: #2d2424; overflow: hidden; }

.menubar { height: 25px; flex: none; display: flex; align-items: center; background: linear-gradient(90deg, #c3c9d3, #c4d2e6 60%, #bfcfe2); font-size: 16.5px; line-height: 23px; white-space: nowrap; color: #16202e; font-weight: 500; padding-bottom: 1px; }
.apple { width: 15px; height: 18px; margin-left: 26px; margin-top: -1px; }
.menus { display: flex; gap: 23.6px; margin-left: 24px; }
.menus b { width: 94px; font-size: 16.3px; letter-spacing: .1px; font-weight: 600; }
.tray { display: flex; align-items: center; margin-left: 163px; }
.t-cam { width: 26px; height: 16px; }
.t-check { width: 20px; height: 18px; margin-left: 12px; }
.t-loc { width: 15px; height: 14px; margin-left: 17px; }
.t-target { width: 20px; height: 20px; margin-left: 14px; }
.t-frame { width: 22px; height: 19px; margin-left: 11px; }
.t-bt { width: 12px; height: 18px; margin-left: 16px; }
.t-mem { width: 23px; height: 16px; margin-left: 19px; }
.t-wifi { width: 24px; height: 17px; margin-left: 12px; }
.t-vol { width: 21px; height: 15px; margin-left: 13px; }
.t-pct { width: 30px; margin-left: 17px; font-size: 13.5px; letter-spacing: -.3px; }
.t-bat { width: 28px; height: 15px; margin-left: 3px; }
.t-du { width: 20px; height: 19px; margin-left: 18px; border-radius: 3px; background: #15202d; color: #fff; font: italic 700 14px/18px "Liberation Sans", sans-serif; text-align: center; }
.t-date { width: 101px; margin-left: 22px; font-size: 16.3px; }
.t-time { width: 38px; margin-left: 10px; font-size: 15.6px; }
.t-user { width: 83px; margin-left: 19px; font-size: 16.1px; }
.t-find { width: 18px; height: 18px; margin-left: 19px; }
.t-list { width: 22px; height: 14px; margin-left: 18px; }

.window { height: 1001px; margin-top: 2px; flex: none; display: flex; flex-direction: column; border-radius: 6px 6px 8px 8px; overflow: hidden; position: relative; z-index: 1; }
.titlebar { height: 60px; flex: none; background: linear-gradient(#c5492f, #b93519); color: #fbe6df; border-bottom: 1px solid #a73016; }
.title-row { height: 32px; display: flex; align-items: center; }
.lights { display: flex; gap: 9px; margin-left: 15px; margin-top: -2px; }
.lights i { width: 15px; height: 15px; border-radius: 50%; }
.close { background: #fc5650; } .min { background: #fdb924; } .max { background: #2bc640; }
.quick { width: 200px; height: 24px; margin-left: 11px; }
.doc-title { display: flex; align-items: center; gap: 5px; width: 140px; margin-left: 515px; font-size: 15.5px; font-weight: 500; color: #fff; white-space: nowrap; }
.doc-title svg { width: 16px; height: 18px; }
.p-mark { font: 700 10px Inter, sans-serif; fill: #fff; }
.search { width: 256px; height: 24px; margin-left: 461px; padding-left: 7px; border-radius: 3px; background: #993420; display: flex; align-items: center; gap: 4px; font-size: 14.6px; color: #d08272; }
.search svg { width: 24px; height: 16px; }
.smile { width: 32px; height: 20px; margin-left: 19px; }
.tab-row { height: 28px; display: flex; align-items: flex-end; justify-content: space-between; }
.tabs { display: flex; margin-left: 14px; font-size: 15.6px; line-height: 27px; font-weight: 500; }
.tabs span { padding: 0 16.200px; }
.tabs .on { margin-right: 1.500px; padding: 0 13.300px; background: #fafafa; color: #bf3d22; border-radius: 2px 2px 0 0; }
.share { display: flex; align-items: center; height: 27px; margin-right: 20px; font-size: 15.300px; font-weight: 500; padding-bottom: 4px; }
.share svg { width: 21px; height: 15px; margin-right: 5px; }
.share .chev { width: 12px; height: 8px; margin: 0 0 0 15px; }

.ribbon { height: 85px; flex: none; display: flex; background: linear-gradient(#f9f9f9, #f2f2f2 60%, #f3f3f3); border-bottom: 1px solid #bcbcbc; font-size: 12.5px; line-height: 13px; }
.grp { display: flex; height: 74px; margin-top: 5px; border-right: 1px solid #dadada; }
.grp .dd { width: 6px; height: 6px; color: #666; }
.big { display: flex; flex-direction: column; align-items: flex-start; height: 74px; padding-top: 3px; }
.big svg { width: 50px; height: 38px; }
.big span { margin-top: 7px; white-space: nowrap; text-align: center; }
.dim { color: #888; }
.col { display: flex; flex-direction: column; height: 74px; }
.row { display: flex; align-items: center; flex: none; height: 27.500px; white-space: nowrap; }
.col .row:first-child { height: 19px; margin-bottom: 4px; }
.g-clip { width: 160px; padding-left: 18px; }
.paste { width: 62px; } .paste span { margin-left: 7px; }
.g-clip .row svg { width: 18px; height: 19px; }
.g-clip .row span { margin-left: 6px; }
.g-clip .row .dd { width: 6px; height: 6px; margin-left: 9px; }
.g-slide { width: 156px; padding-left: 12px; }
.newslide { width: 66px; } .newslide svg { width: 52px; } .newslide span { margin-left: 6px; }
.g-slide .row svg { width: 21px; height: 19px; }
.g-slide .row span { margin-left: 5px; }
.g-slide .row .dd { width: 6px; height: 6px; margin-left: 5px; }
.g-slide .row .tight { margin-left: 4px; }
.line { display: flex; height: 27px; }
.g-font { width: 369px; flex-direction: column; padding: 5px 0 0 9px; gap: 9px; }
.g-font .dd, .g-para .dd { color: #b5b5b5; }
.combo { width: 62px; margin-right: 6px; background: #fafafa; border: 1px solid #dedede; border-radius: 3px; display: flex; align-items: center; justify-content: flex-end; padding-right: 5px; }
.combo.wide { width: 164px; }
.seg { height: 27px; border: 1px solid #cfcfcf; border-radius: 3px; background: #f6f6f6; display: flex; color: #a0a0a0; font-size: 16px; }
.seg > svg { height: 27px; margin: -1px; }
.seg span { display: flex; align-items: center; justify-content: center; flex: 1; border-right: 1px solid #d4d4d4; }
.seg span:last-child { border-right: 0; }
.seg i.up, .seg i.down { border: 4.5px solid transparent; margin-left: 2px; }
.seg i.up { border-bottom: 5px solid #9fc4e6; border-top: 0; } .seg i.down { border-top: 5px solid #9fc4e6; border-bottom: 0; }
.f1 { width: 70px; font-size: 15px; } .f1 .lg { font-size: 18px; } .f2 { width: 35px; margin-left: 6px; }
.f3 { width: 295px; } .f3 .sm { font-size: 13px; } .f3 .it { font-family: "Liberation Serif", serif; font-size: 18px; }
.f3 .w2 { flex: 0 0 42px; font-size: 15px; gap: 4px; }
.seg em { font-style: normal; }
.f3 em { font-size: 12px; border-bottom: 2px solid #a8cbea; letter-spacing: 1px; }
.seg sup, .seg sub { font-size: 10px; color: #8fbbe2; line-height: 1; } .seg sup { margin-top: -9px; } .seg sub { margin-bottom: -10px; }
.f4 { width: 48px; margin-left: 6px; } .f4 .w3 { flex: 0 0 32px; font-size: 16px; } .f4 em { width: 23px; text-align: center; line-height: 16px; padding-bottom: 2px; border-bottom: 4px solid #fff; }
.glyph { font: 500 18px Inter, sans-serif; fill: #aaa; }
.g-para { width: 351px; padding-left: 10px; }
.paras { width: 277px; display: flex; flex-direction: column; gap: 9px; padding-top: 5px; }
.paras .line { gap: 5px; }
.p1 { width: 93px; } .p2 { width: 71px; } .p3 { width: 44px; } .p4 { width: 175px; } .p5 { width: 87px; }
.paras .seg > svg { width: calc(100% + 2px); }
.tiny-a { font: 10px Inter, sans-serif; fill: #8fbbe2; }
.smart span { margin-left: -4px; width: 54px; }
.g-insert { width: 200px; padding-left: 15px; }
.pic { width: 63px; } .pic span { margin-left: 9px; }
.shp { width: 60px; } .shp span { margin-left: 7px; }
.txt span { margin-left: 2px; }
.box-a { font: 700 13px "Liberation Sans", sans-serif; fill: #333; }
.g-style { border: 0; padding-left: 17px; }
.arr { width: 57px; } .arr span { margin-left: 7px; }
.quickst { width: 65px; }
.fills { padding-top: 5px; display: flex; flex-direction: column; gap: 8px; font-size: 12.800px; }
.fills .row > svg:first-child { width: 22px; height: 23px; }
.fills .row span { margin-left: 6px; } .fills .row .dd { margin-left: 8px; color: #bbb; }

.work { flex: 1; display: flex; min-height: 0; background: #f7f7f7; }
.pane { width: 275px; flex: none; overflow: hidden; border-right: 1px solid #c6c6c6; }
.thumbs { margin-top: -105.200px; display: flex; flex-direction: column; gap: 19.800px; }
.thumb { display: flex; gap: 12px; height: 157px; }
.thumb b { width: 28px; text-align: right; font-size: 17.500px; line-height: 15px; color: #4c4c4c; font-weight: 700; letter-spacing: -.6px; }
.thumb > svg { width: 207px; height: 157px; border: 1px solid #fff; box-shadow: 0 0 0 1.500px #c4c4c4; overflow: hidden; }
.thumb.active > svg { box-shadow: 0 0 0 .5px #fff, 0 0 0 4.300px #c1462d; }
.tt { font: 300 12.400px Inter, "Noto Sans CJK SC", sans-serif; fill: #a2a2a2; }
.tb { font: 300 9px "Liberation Sans", "Noto Sans CJK SC", sans-serif; fill: #d0d0d0; }
.gs { font: 6.200px Lato, "Noto Sans CJK SC", sans-serif; fill: #333; } .gs.red { fill: #e02020; font-size: 4.500px; font-weight: 700; }
.code { font: 3.800px "Liberation Mono", monospace; fill: #333; }
.cl { font: 4.300px "Liberation Sans", "Noto Sans CJK SC", sans-serif; fill: #16264a; text-anchor: middle; }
.vt { font: 4.300px "Noto Sans CJK SC", sans-serif; fill: #a04040; writing-mode: vertical-rl; }

.stage { flex: 1; display: flex; flex-direction: column; }
.canvas { flex: 1; background: linear-gradient(#f1f1f1, #e8e8e8 45%, #dedede); padding: 27.500px 0 0 216px; }
.slide { width: 1020px; height: 767px; box-shadow: 0 2px 14px rgba(0,0,0,.13); }
.notes { height: 6px; flex: none; border-top: 1px solid #c0c0c0; background: #f6f6f6; }
.s-title { font: 400 62px "Noto Sans CJK SC", sans-serif; fill: #a6a6a6; filter: drop-shadow(1.500px 1.500px 0 #555); }
.s-body { font: 300 45.500px "Noto Sans CJK SC", sans-serif; fill: #fff; filter: drop-shadow(2px 2px 1px #1414a8); }
.d-text { font: 500 20.500px "Liberation Serif", "Noto Sans CJK SC", serif; fill: #3c3c3c; }
.d-text .thin { font-weight: 400; }

.status { height: 27px; flex: none; display: flex; align-items: center; background: linear-gradient(#dcdcdc, #c9c9c9); border-top: 1px solid #aaa; font-size: 14.600px; line-height: 20px; color: #4c4c4c; white-space: nowrap; }
.status span { padding-bottom: 3px; }
.count { width: 175px; margin-left: 29px; }
.lang { margin-left: 24px; width: 70px; }
.views { margin-left: auto; margin-right: 33px; display: flex; align-items: center; }
.views > span { margin-left: 5px; width: 29px; }
.v-note { width: 16px; height: 15px; } .v-com { width: 17px; height: 14px; margin-left: 24px; }
.cur { width: 44px; height: 27px; margin-left: 12px; background: #949494; display: flex; align-items: center; justify-content: center; }
.cur svg { width: 17px; height: 16px; }
.v-grid { width: 19px; height: 14px; margin-left: 12px; } .v-show { width: 18px; height: 15px; margin-left: 25px; }
.v-minus { width: 10px; height: 10px; margin-left: 32px; }
.slider { width: 117px; height: 5px; margin-left: 19px; border-radius: 3px; background: #8f8f8f; display: flex; align-items: center; padding-left: 54px; }
.slider i { width: 15px; height: 15px; border-radius: 50%; background: #fff; box-shadow: 0 0 2px #777; }
.v-plus { width: 10px; height: 10px; margin-left: 21px; }
.views .zoom { width: 35px; margin-left: 31px; letter-spacing: -.4px; }
.v-fit { width: 16px; height: 16px; margin-left: 25px; }

.behind { height: 17px; flex: none; margin-top: -8px; padding: 8px 0 0 6px; display: flex; gap: 12px; overflow: hidden; background: #7b7976; border-radius: 0 0 7px 7px; font-size: 15px; line-height: 9px; color: #222; z-index: 0; }
.behind svg { width: 25px; height: 9px; }
.behind span { margin-top: -8px; letter-spacing: .1px; }
.screen > .desktop { flex: 1; margin-top: -8px; padding-top: 8px; display: flex; background: linear-gradient(90deg, #102c42, #17304a 18%, #0a1118 82%, #06090c); }
.stars { position: absolute; width: 1728px; height: 43px; }
.dock { position: relative; width: 1130px; margin-left: 299px; padding: 6px 0 0 3px; display: flex; background: linear-gradient(90deg, #4a6784, #48617c 60%, #4a4e5c); border-radius: 5px 5px 0 0; }
.dock i { width: 33.600px; display: flex; flex-direction: column; align-items: center; }
.dock i svg { width: 28px; height: 28px; }
.dock .run::after { content: ""; width: 4px; height: 4px; margin-top: 4px; border-radius: 50%; background: #0c0f14; }
.rule { width: 1px; height: 32px; margin: 0 7px 0 7px; background: #2c323c; }
.jb { font: 700 10.500px "Open Sans", sans-serif; fill: #fff; text-anchor: middle; }
.yd { font: 900 12px "Noto Sans CJK SC", sans-serif; fill: #fff; text-anchor: middle; }
.sh { font: 700 8px "Liberation Mono", monospace; fill: #eee; } .sh.gr { fill: #2be04a; font-size: 9px; }
.pp { font: 700 14px Inter, sans-serif; fill: #fff; }
```
